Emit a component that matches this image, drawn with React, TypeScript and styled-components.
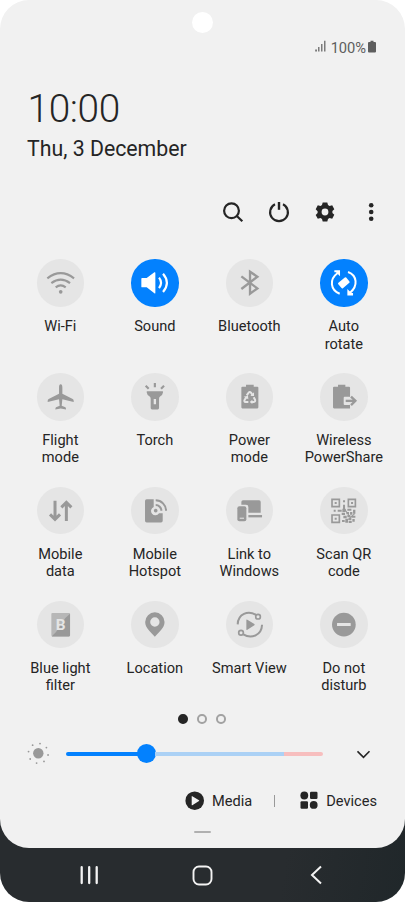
import React from "react";
import styled, { createGlobalStyle } from "styled-components";

const Global = createGlobalStyle`
  * { box-sizing: border-box; }
  body { margin: 0; background: #fff; font-family: Roboto, sans-serif; color: #252525; }
  svg { display: block; flex: none; }
`;

const Phone = styled.div`
  width: 405px;
  height: 902px;
  overflow: hidden;
  border-radius: 0 0 29px 29px;
  background: linear-gradient(100deg, #282c2f 70%, #20272a) bottom / 100% 100px no-repeat;
`;
const Panel = styled.main`
  height: 848px;
  display: flex;
  flex-direction: column;
  border-radius: 29px;
  background: #f1f1f1;
`;
const Camera = styled.div`
  width: 21.4px;
  height: 21.4px;
  margin: 11.6px auto 0;
  border-radius: 50%;
  background: #fff;
`;
const StatusBar = styled.div`
  height: 20px;
  margin-top: 4px;
  padding-right: 29px;
  display: flex;
  align-items: center;
  justify-content: flex-end;
  font-size: 14.7px;
  color: #5e5e5e;
  letter-spacing: -0.1px;
`;
const Percent = styled.span`
  margin: 2px 2.2px 0 5px;
`;
const Clock = styled.div`
  height: 46px;
  margin: 29.5px 0 0 27.6px;
  font-size: 38.8px;
  line-height: 46px;
  font-weight: 300;
  letter-spacing: -0.4px;
`;
const DateText = styled.div`
  height: 28px;
  margin: 2.5px 0 0 27px;
  font-size: 21.3px;
  line-height: 28px;
`;
const Toolbar = styled.div`
  height: 24px;
  margin-top: 37px;
  padding: 0 22px 0 221px;
  display: flex;
  align-items: center;
  justify-content: space-between;
`;
const ToolButton = styled.button`
  width: 24px;
  height: 24px;
  padding: 0;
  border: 0;
  background: none;
  color: inherit;
`;
const Tiles = styled.div`
  height: 456px;
  margin: 35.3px 13px 0 13.1px;
  display: grid;
  grid-template-columns: repeat(4, 94.5px);
  grid-auto-rows: 113.85px;
`;
const Tile = styled.div`
  display: flex;
  flex-direction: column;
  align-items: center;
`;
const TileIcon = styled.div<{ $on?: boolean }>`
  width: 47.4px;
  height: 47.4px;
  border-radius: 50%;
  background: ${(p) => (p.$on ? "#0381fe" : "#e5e5e5")};
  color: ${(p) => (p.$on ? "#fff" : "#999")};
`;
const Label = styled.div`
  margin-top: 11.7px;
  font-size: 14.6px;
  line-height: 17.2px;
  text-align: center;
  white-space: pre;
`;
const Pager = styled.div`
  height: 10px;
  margin: -0.9px 1px 0 0;
  display: flex;
  justify-content: center;
  gap: 9.6px;
`;
const Dot = styled.i<{ $active?: boolean }>`
  width: 9.6px;
  height: 9.6px;
  border-radius: 50%;
  border: 2px solid ${(p) => (p.$active ? "#252525" : "#a2a2a2")};
  background: ${(p) => (p.$active ? "#252525" : "transparent")};
`;
const Brightness = styled.div`
  height: 24px;
  margin-top: 17.3px;
  padding: 0 34px 0 27px;
  display: flex;
  align-items: center;
`;
const Track = styled.div`
  width: 256.5px;
  height: 20px;
  margin: 0 34px 0 16.4px;
  display: flex;
  align-items: center;
`;
const Segment = styled.span<{ $w: number; $c: string; $end?: "left" | "right" }>`
  width: ${(p) => p.$w}px;
  height: 4px;
  background: ${(p) => p.$c};
  border-radius: ${(p) =>
    p.$end === "left" ? "2px 0 0 2px" : p.$end === "right" ? "0 2px 2px 0" : "0"};
`;
const Thumb = styled.span`
  width: 19.4px;
  height: 19.4px;
  margin: 0 -1px;
  border-radius: 50%;
  background: #0381fe;
`;
const Shortcuts = styled.div`
  height: 24px;
  margin-top: 23px;
  padding-right: 28px;
  display: flex;
  align-items: center;
  justify-content: flex-end;
  font-size: 14.6px;
`;
const Shortcut = styled.div`
  display: flex;
  align-items: center;
  gap: 7px;
`;
const Divider = styled.span`
  width: 1px;
  height: 12px;
  margin: 0 25.5px 0 21.5px;
  background: #999;
`;
const Handle = styled.div`
  width: 17px;
  height: 2px;
  margin: 18px auto 0;
  border-radius: 1px;
  background: #b0b0b0;
`;
const NavBar = styled.nav`
  height: 54px;
  padding: 0 82px 0 79px;
  display: flex;
  align-items: center;
  justify-content: space-between;
  color: #f3f3f3;
`;
const HomeIcon = styled.svg`
  margin-right: 3.2px;
`;

/* Tile glyphs share a 142-unit square that spans the whole round button. */
const Glyph = ({ children }: { children: React.ReactNode }) => (
  <svg width="100%" height="100%" viewBox="0 0 142 142" fill="currentColor">
    {children}
  </svg>
);
const Lines = ({ d, w = 6, cap = "butt" }: { d: string; w?: number; cap?: "butt" | "round" }) => (
  <path d={d} fill="none" stroke="currentColor" strokeWidth={w} strokeLinecap={cap} />
);
const HOLE = "#e5e5e5";

const tiles: { label: string; on?: boolean; icon: React.ReactNode }[] = [
  {
    label: "Wi-Fi",
    icon: (
      <>
        <Lines d="M31 58Q71 27 111 58M43 72Q71 51 99 72M56 85Q71 73 86 85" w={6.5} />
        <circle cx="71" cy="98.500" r="5.500" />
      </>
    ),
  },
  {
    label: "Sound",
    on: true,
    icon: (
      <>
        <path d="M33 57H47L70 40Q73 38 73 42V101Q73 105 70 103L47 85H33Q31 85 31 83V59Q31 57 33 57Z" />
        <Lines d="M84 56Q96 71 84 87M96 44Q119 71 96 99" w={6.5} />
      </>
    ),
  },
  { label: "Bluetooth", icon: <Lines d="M46 52L94 88L72 104V38L94 53L46 90" w={7} /> },
  {
    label: "Auto\nrotate",
    on: true,
    icon: (
      <>
        <Lines d="M59 104C31 93 27 61 53 42M84 39C111 49 115 80 90 101" />
        <path d="M43 34H60V52L54 46L48 40H43ZM99 109H82V90L88 96L95 102H99Z" />
        <rect x="56" y="61" width="31" height="21" rx="3" transform="rotate(-40 71.500 71.500)" />
      </>
    ),
  },
  {
    label: "Flight\nmode",
    icon: (
      <path d="M71 34C75 34 76 39 76 44V62L107 78Q110 80 110 84V87L76 79L74 98L85 103Q87 105 87 109L71 106L55 109Q55 105 57 103L68 98L66 79L32 87V84Q32 80 35 78L66 62V44C66 39 67 34 71 34Z" />
    ),
  },
  {
    label: "Torch",
    icon: (
      <>
        <path
          fillRule="evenodd"
          d="M49 55H94Q97 55 96 58Q95 66 88 70Q84 72 84 77V105Q84 109 80 109H63Q59 109 59 105V77Q59 72 55 70Q48 66 47 58Q46 55 49 55ZM68 78V94H75V78Z"
        />
        <Lines d="M71.500 30V43M44 38L53 47M99 38L90 47" w={6.5} />
      </>
    ),
  },
  {
    label: "Power\nmode",
    icon: (
      <>
        <path d="M60 35H83V41H94Q97 41 97 44V103Q97 106 94 106H49Q46 106 46 103V44Q46 41 49 41H60Z" />
        <g fill="none" stroke={HOLE} strokeWidth="6">
          <path d="M62 67L68 59Q71 55 75 59L79 65" />
          <path d="M83 73L87 80Q89 86 83 87H75" />
          <path d="M67 87H59Q53 86 56 80L61 73" />
        </g>
        <path d="M84 58V69H73ZM79 80V93L71 87ZM53 71L66 68L67 79Z" fill={HOLE} />
      </>
    ),
  },
  {
    label: "Wireless\nPowerShare",
    icon: (
      <>
        <path d="M54 35H76V41H87Q90 41 90 44V106H42Q39 106 39 103V44Q39 41 42 41H54Z" />
        <rect x="71" y="71" width="20" height="25" rx="3" fill={HOLE} />
        <path d="M77 80H104V87H77Z" />
        <Lines d="M93 71L106 83.500L93 96" w={7} />
      </>
    ),
  },
  {
    label: "Mobile\ndata",
    icon: <Lines d="M54 41V96M39 82L54 97L69 82M88 102V47M73 61L88 46L103 61" w={9} />,
  },
  {
    label: "Mobile\nHotspot",
    icon: (
      <>
        <path d="M47 37H68V60A13 13 0 1 0 84 79H95V101Q95 106 90 106H47Q42 106 42 101V42Q42 37 47 37Z" />
        <circle cx="74" cy="71" r="5.500" />
        <Lines d="M74 54A17 17 0 0 1 91 71M74 40A31 31 0 0 1 105 71" />
      </>
    ),
  },
  {
    label: "Link to\nWindows",
    icon: (
      <>
        <path d="M51 40H99Q104 40 104 45V77H67V60Q67 53 60 53H46V45Q46 40 51 40Z" />
        <rect x="34" y="58" width="27" height="45" rx="6" />
        <path d="M67 84H108V91H67Z" />
        <path d="M41 92H54V95H41Z" fill={HOLE} />
      </>
    ),
  },
  {
    label: "Scan QR\ncode",
    icon: (
      <>
        <path
          fill="none"
          stroke="currentColor"
          strokeWidth="5"
          d="M36 37H58V59H36ZM85 37H106V59H85ZM36 84H58V106H36Z"
        />
        <path d="M44 45H50V51H44ZM93 45H99V51H93ZM44 92H50V98H44ZM69 40H75V46H69ZM69 53H75V65H69ZM41 68H47V74H41ZM53 68H65V74H53ZM67 65H77V75H67ZM82 65H94V71H82ZM99 68H106V80H99ZM65 77H75V84H65ZM79 75H87V82H79ZM90 75H97V83H90ZM70 86H80V94H70ZM82 84H91V91H82ZM94 86H106V92H94ZM76 95H84V107H76ZM87 93H94V100H87ZM66 99H74V105H66ZM97 96H104V104H97ZM86 102H95V108H86Z" />
        <path d="M72 64L92 92M104 80L77 104" stroke="currentColor" strokeWidth="3" />
      </>
    ),
  },
  {
    label: "Blue light\nfilter",
    icon: (
      <>
        <rect x="43" y="36" width="56" height="70" rx="3" fill="#b7b7b7" />
        <path d="M99 38V103Q99 106 96 106H44L57 93L85 51Z" />
        <text x="71" y="87" fontSize="46" fontWeight="700" textAnchor="middle" fill={HOLE}>
          B
        </text>
      </>
    ),
  },
  {
    label: "Location",
    icon: (
      <path
        fillRule="evenodd"
        d="M71.500 34A29 29 0 0 1 100.500 63C100.500 81 84 93 71.500 107C59 93 42.500 81 42.500 63A29 29 0 0 1 71.500 34ZM71.500 49A14 14 0 1 0 71.500 77A14 14 0 1 0 71.500 49Z"
      />
    ),
  },
  {
    label: "Smart View",
    icon: (
      <>
        <Lines d="M35 70C36 39 66 27 90 42M108 71C107 102 76 115 52 100" />
        <g fill="none" stroke="currentColor" strokeWidth="5">
          <circle cx="96" cy="47" r="7" />
          <circle cx="45" cy="95" r="7" />
        </g>
        <path d="M61 57Q61 54 64 56L85 69Q87 71 85 73L64 86Q61 88 61 85Z" />
      </>
    ),
  },
  {
    label: "Do not\ndisturb",
    icon: (
      <>
        <circle cx="71.500" cy="70.500" r="35.500" />
        <rect x="51" y="66" width="41" height="9" rx="1" fill={HOLE} />
      </>
    ),
  },
];

const rays = Array.from({ length: 8 }, (_, i) => {
  const a = ((i * 45 + 10) * Math.PI) / 180;
  return { x: 11.3 + 9.9 * Math.cos(a), y: 11.3 + 9.9 * Math.sin(a) };
});

export default function App() {
  return (
    <>
      <Global />
      <Phone>
        <Panel>
          <Camera />
          <StatusBar>
            <svg width="11" height="13" viewBox="0 0 11 13" fill="currentColor">
              <path d="M.3 9.500h1.500v2H.3zM3.200 7h1.200v4.500H3.200zM6.200 4h1.200v7.500H6.200zM9.200.8h1.200v10.700H9.200z" />
            </svg>
            <Percent>100%</Percent>
            <svg width="8" height="13" viewBox="0 0 8 13" fill="currentColor">
              <path d="M2.500.8h3v1.200H7q1 0 1 1v8.500q0 1-1 1H1q-1 0-1-1V3q0-1 1-1h1.500z" />
            </svg>
          </StatusBar>
          <Clock>10:00</Clock>
          <DateText>Thu, 3 December</DateText>
          <Toolbar>
            <ToolButton aria-label="Search">
              <svg width="24" height="24" fill="none" stroke="currentColor" strokeWidth="2.200">
                <circle cx="10.500" cy="10.700" r="7.400" />
                <path d="M15.800 16L21.300 21.300" />
              </svg>
            </ToolButton>
            <ToolButton aria-label="Power">
              <svg width="24" height="24" fill="none" stroke="currentColor" strokeWidth="2.100">
                <path d="M8 4.300A8.900 8.900 0 1 0 16 4.300" />
                <path d="M12 2V9.800" strokeWidth="2.400" />
              </svg>
            </ToolButton>
            <ToolButton aria-label="Settings">
              <svg width="24" height="24" fill="currentColor">
                <path
                  fillRule="evenodd"
                  d="M9.700 2.600h4.600l.7 2.500 1.500.9 2.700-.7 2.100 3.900-1.900 1.900v1.800l1.900 1.900-2.100 3.900-2.700-.7-1.500.9-.7 2.500H9.700L9 19l-1.500-.9-2.700.7-2.100-3.900 1.900-1.900v-1.800L2.700 9.200l2.100-3.900 2.700.7L9 5.100zM12 8.600a3.400 3.400 0 1 0 0 6.800a3.400 3.400 0 1 0 0-6.800z"
                />
              </svg>
            </ToolButton>
            <ToolButton aria-label="More options">
              <svg width="24" height="24" fill="currentColor">
                <circle cx="12.200" cy="5.200" r="2.300" />
                <circle cx="12.200" cy="12" r="2.300" />
                <circle cx="12.200" cy="18.800" r="2.300" />
              </svg>
            </ToolButton>
          </Toolbar>
          <Tiles>
            {tiles.map((t) => (
              <Tile key={t.label}>
                <TileIcon $on={t.on}>
                  <Glyph>{t.icon}</Glyph>
                </TileIcon>
                <Label>{t.label}</Label>
              </Tile>
            ))}
          </Tiles>
          <Pager>
            <Dot $active />
            <Dot />
            <Dot />
          </Pager>
          <Brightness>
            <svg width="23" height="23" fill="#999">
              <circle cx="11.300" cy="11.300" r="5.200" />
              {rays.map((r, i) => (
                <circle key={i} cx={r.x} cy={r.y} r="0.900" />
              ))}
            </svg>
            <Track>
              <Segment $w={71.5} $c="#0381fe" $end="left" />
              <Thumb />
              <Segment $w={128.6} $c="#abd1f5" />
              <Segment $w={39} $c="#f7bebe" $end="right" />
            </Track>
            <svg width="14" height="10" fill="none" stroke="currentColor" strokeWidth="1.600">
              <path d="M.5 2.300L6.500 8.300L12.500 2.300" />
            </svg>
          </Brightness>
          <Shortcuts>
            <Shortcut>
              <svg width="20" height="20" fill="currentColor">
                <circle cx="9.700" cy="9.700" r="9.300" />
                <path d="M6.700 5.500Q6.700 4.800 7.300 5.200L14 9.300Q14.500 9.700 14 10.100L7.300 14.200Q6.700 14.600 6.700 13.900Z" fill="#f1f1f1" />
              </svg>
              Media
            </Shortcut>
            <Divider />
            <Shortcut>
              <svg width="19" height="19" fill="currentColor">
                <circle cx="4.300" cy="4.500" r="3.900" />
                <rect x="10" y=".7" width="7.500" height="7.300" rx="1.200" />
                <rect x=".5" y="10.200" width="7.500" height="7.500" rx="1.200" />
                <circle cx="13.700" cy="13.900" r="3.900" />
              </svg>
              Devices
            </Shortcut>
          </Shortcuts>
          <Handle />
        </Panel>
        <NavBar>
          <svg width="20" height="20" stroke="currentColor" strokeWidth="2.300" strokeLinecap="round">
            <path d="M2.700 2.200V18M10.200 2.200V18M17.700 2.200V18" />
          </svg>
          <HomeIcon width="21" height="21" fill="none" stroke="currentColor" strokeWidth="1.900">
            <rect x="1.500" y="1.500" width="18" height="18" rx="5.500" />
          </HomeIcon>
          <svg width="14" height="20" fill="none" stroke="currentColor" strokeWidth="2">
            <path d="M12 1.500L3 10L12 18.500" />
          </svg>
        </NavBar>
      </Phone>
    </>
  );
}
